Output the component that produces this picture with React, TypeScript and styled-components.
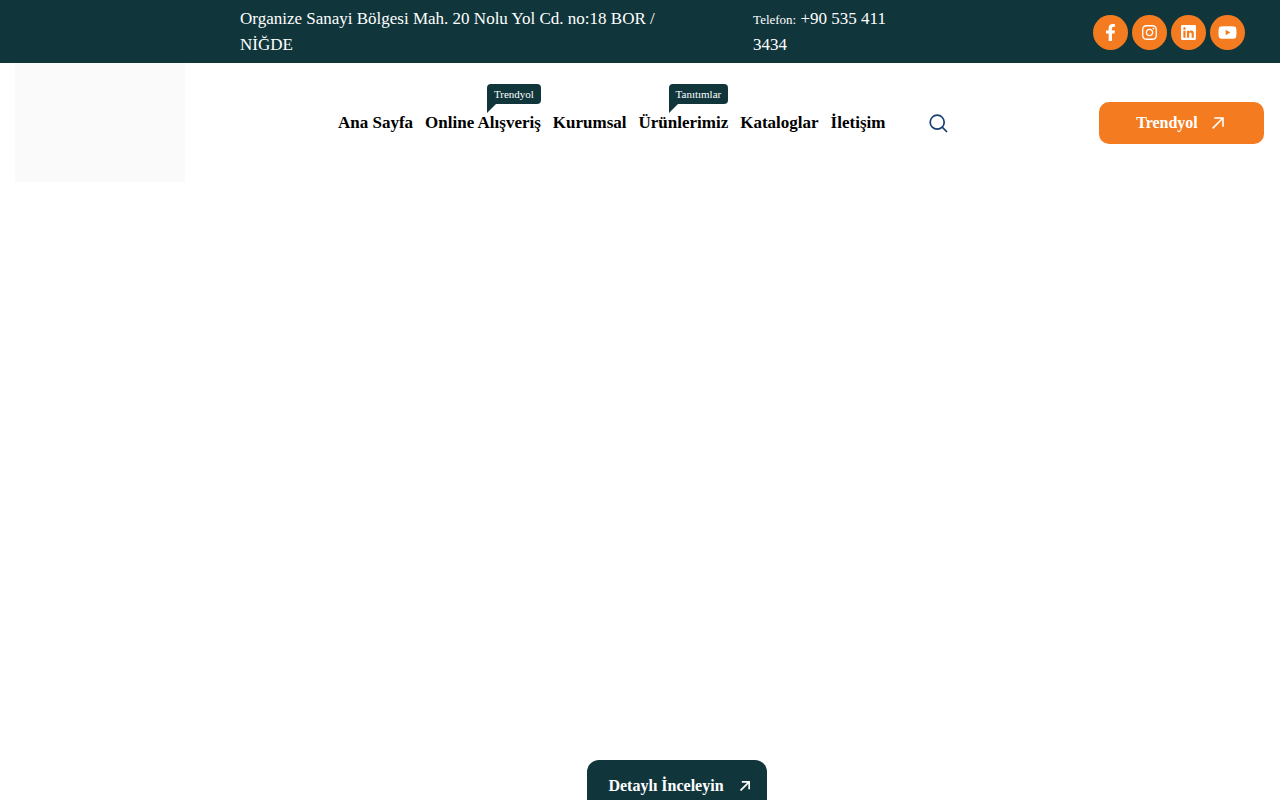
import React from "react";
import styled, { createGlobalStyle } from "styled-components";
import { FaFacebookF, FaInstagram, FaLinkedin, FaYoutube } from "react-icons/fa";

const teal = "#10363b";
const orange = "#f47b20";

const GlobalStyle = createGlobalStyle`
  *, *::before, *::after { box-sizing: border-box; }
  body {
    margin: 0;
    background: #fff;
    font-family: "Liberation Serif", "Times New Roman", serif;
  }
  a { color: inherit; text-decoration: none; }
  svg { display: block; flex: none; }
`;

const Page = styled.div`
  display: flex;
  flex-direction: column;
  height: 100vh;
  overflow: hidden;
`;

const TopBar = styled.div`
  display: grid;
  grid-template-columns: 42% 14% 1fr;
  flex: none;
  padding: 6px 35px 5px 240px;
  column-gap: 91px;
  background: ${teal};
  color: #fff;
  font-size: 17px;
  line-height: 26px;
`;

const Address = styled.address`
  font-style: normal;
`;

const Phone = styled.div``;

const PhoneLabel = styled.span`
  font-size: 13px;
  line-height: 1;
`;

const SocialList = styled.div`
  display: flex;
  align-items: center;
  justify-content: flex-end;
  gap: 4px;
`;

const SocialLink = styled.a`
  display: flex;
  align-items: center;
  justify-content: center;
  width: 35px;
  height: 35px;
  border-radius: 50%;
  background: ${orange};
  color: #fff;
`;

const Header = styled.header`
  display: flex;
  align-items: center;
  flex: none;
  height: 120px;
  padding: 0 16px 0 15px;
`;

const Logo = styled.a`
  flex: none;
  align-self: stretch;
  width: 170px;
  margin-bottom: 1px;
  background: #fafafa;
`;

const Nav = styled.nav`
  display: flex;
  gap: 12px;
  margin-left: 153px;
`;

const NavLink = styled.a`
  position: relative;
  color: #000;
  font-size: 17px;
  font-weight: 700;
  line-height: 26px;
  white-space: nowrap;
`;

const Badge = styled.span`
  position: absolute;
  right: 0;
  bottom: 32px;
  padding: 0 7px;
  border-radius: 4px 4px 4px 0;
  background: ${teal};
  color: #fff;
  font-size: 11px;
  font-weight: 400;
  line-height: 20px;

  &::after {
    content: "";
    position: absolute;
    top: 100%;
    left: 0;
    border-top: 9px solid ${teal};
    border-right: 9px solid transparent;
  }
`;

const SearchButton = styled.button`
  margin-left: 44px;
  padding: 0;
  border: 0;
  background: none;
  color: #173f73;
  cursor: pointer;
`;

const ShopLink = styled.a`
  display: flex;
  align-items: center;
  justify-content: center;
  gap: 14px;
  width: 165px;
  height: 42px;
  margin-left: auto;
  padding-right: 3px;
  border-radius: 10px;
  background: ${orange};
  color: #fff;
  font-size: 16px;
  font-weight: 700;
`;

const Hero = styled.main`
  display: flex;
  flex: 1;
  flex-direction: column;
  align-items: center;
  justify-content: flex-end;
  padding-left: 74px;
`;

const DetailLink = styled.a`
  display: flex;
  align-items: center;
  justify-content: center;
  gap: 16px;
  width: 180px;
  height: 52px;
  margin-bottom: -12px;
  padding-left: 4px;
  border-radius: 12px;
  background: ${teal};
  color: #fff;
  font-size: 16px;
  font-weight: 700;
`;

const Arrow = ({ size, weight }: { size: number; weight: number }) => (
  <svg width={size} height={size} viewBox="0 0 12 12" fill="none" stroke="currentColor" strokeWidth={weight} aria-hidden="true">
    <path d="M0.6 11.4 11 1M2.2 1H11V9.8" />
  </svg>
);

const links: { label: string; badge?: string }[] = [
  { label: "Ana Sayfa" },
  { label: "Online Alışveriş", badge: "Trendyol" },
  { label: "Kurumsal" },
  { label: "Ürünlerimiz", badge: "Tanıtımlar" },
  { label: "Kataloglar" },
  { label: "İletişim" },
];

const socials = [
  { name: "Facebook", Icon: FaFacebookF, size: 17 },
  { name: "Instagram", Icon: FaInstagram, size: 17 },
  { name: "LinkedIn", Icon: FaLinkedin, size: 17 },
  { name: "YouTube", Icon: FaYoutube, size: 19 },
];

export default function App() {
  return (
    <Page lang="tr">
      <GlobalStyle />
      <TopBar>
        <Address>Organize Sanayi Bölgesi Mah. 20 Nolu Yol Cd. no:18 BOR / NİĞDE</Address>
        <Phone>
          <PhoneLabel>Telefon:</PhoneLabel> <a href="tel:+905354113434">+90 535 411 3434</a>
        </Phone>
        <SocialList>
          {socials.map(({ name, Icon, size }) => (
            <SocialLink key={name} href="#" aria-label={name}>
              <Icon size={size} />
            </SocialLink>
          ))}
        </SocialList>
      </TopBar>
      <Header>
        <Logo href="#" aria-label="Ana Sayfa" />
        <Nav>
          {links.map(({ label, badge }) => (
            <NavLink key={label} href="#">
              {label}
              {badge && <Badge>{badge}</Badge>}
            </NavLink>
          ))}
        </Nav>
        <SearchButton type="button" aria-label="Ara">
          <svg width="19" height="19" viewBox="0 0 19 19" fill="none" stroke="currentColor" strokeWidth="1.7">
            <circle cx="8.2" cy="8.2" r="7" />
            <path d="M13.2 13.2 18 18" />
          </svg>
        </SearchButton>
        <ShopLink href="#">
          Trendyol
          <Arrow size={12} weight={1.6} />
        </ShopLink>
      </Header>
      <Hero>
        <DetailLink href="#">
          Detaylı İnceleyin
          <Arrow size={10} weight={2} />
        </DetailLink>
      </Hero>
    </Page>
  );
}
